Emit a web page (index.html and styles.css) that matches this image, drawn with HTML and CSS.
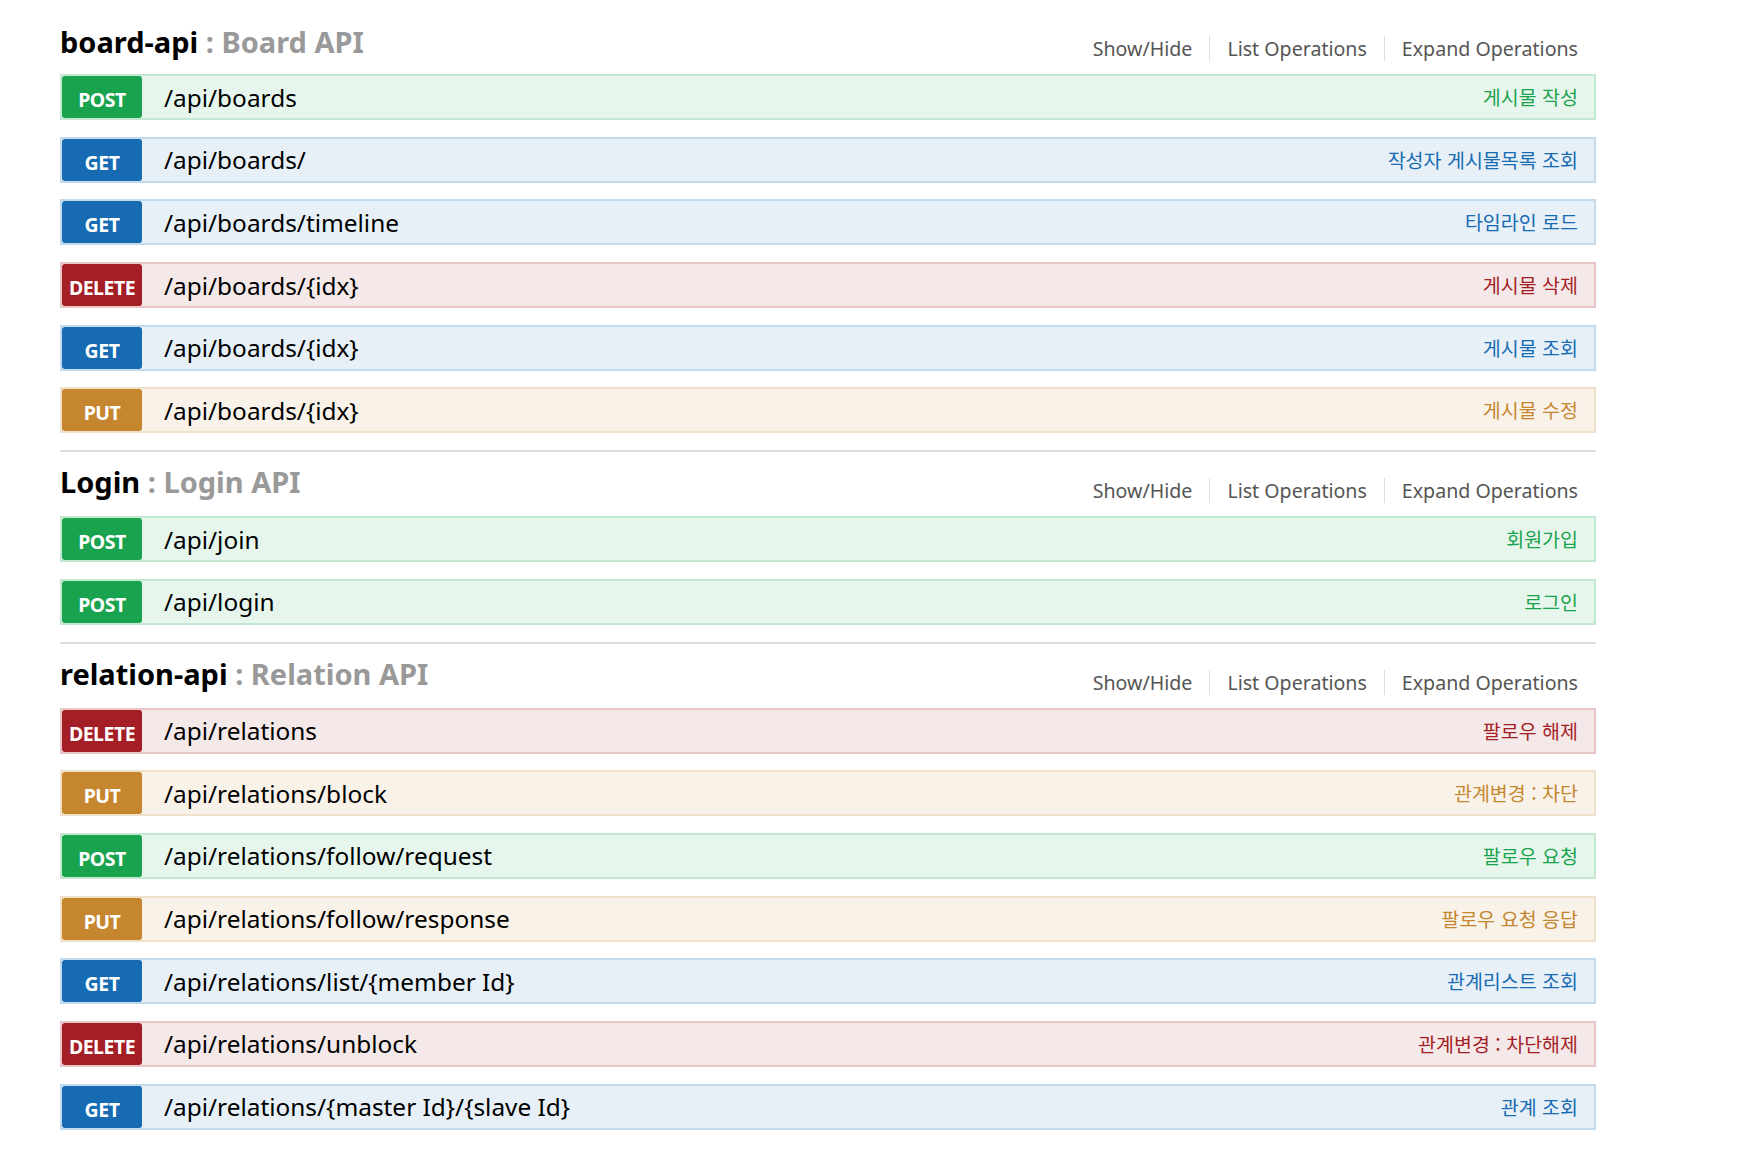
FILE: index.html
```html
<!DOCTYPE html>
<html lang="ko">
<head>
<meta charset="utf-8">
<title>Swagger API</title>
<link rel="stylesheet" href="styles.css">
</head>
<body>
<div class="resources">

  <section class="resource first">
    <div class="res-heading">
      <h2><span class="res-name">board-api</span><span class="res-desc"> : Board API</span></h2>
      <ul class="options">
        <li>Show/Hide</li>
        <li>List Operations</li>
        <li>Expand Operations</li>
      </ul>
    </div>
    <ul class="operations">
      <li class="op post"><span class="method">POST</span><span class="path">/api/boards</span><span class="summary">게시물 작성</span></li>
      <li class="op get"><span class="method">GET</span><span class="path">/api/boards/</span><span class="summary">작성자 게시물목록 조회</span></li>
      <li class="op get"><span class="method">GET</span><span class="path">/api/boards/timeline</span><span class="summary">타임라인 로드</span></li>
      <li class="op delete"><span class="method">DELETE</span><span class="path">/api/boards/{idx}</span><span class="summary">게시물 삭제</span></li>
      <li class="op get"><span class="method">GET</span><span class="path">/api/boards/{idx}</span><span class="summary">게시물 조회</span></li>
      <li class="op put"><span class="method">PUT</span><span class="path">/api/boards/{idx}</span><span class="summary">게시물 수정</span></li>
    </ul>
  </section>

  <section class="resource">
    <div class="res-heading">
      <h2><span class="res-name">Login</span><span class="res-desc"> : Login API</span></h2>
      <ul class="options">
        <li>Show/Hide</li>
        <li>List Operations</li>
        <li>Expand Operations</li>
      </ul>
    </div>
    <ul class="operations">
      <li class="op post"><span class="method">POST</span><span class="path">/api/join</span><span class="summary">회원가입</span></li>
      <li class="op post"><span class="method">POST</span><span class="path">/api/login</span><span class="summary">로그인</span></li>
    </ul>
  </section>

  <section class="resource last">
    <div class="res-heading">
      <h2><span class="res-name">relation-api</span><span class="res-desc"> : Relation API</span></h2>
      <ul class="options">
        <li>Show/Hide</li>
        <li>List Operations</li>
        <li>Expand Operations</li>
      </ul>
    </div>
    <ul class="operations">
      <li class="op delete"><span class="method">DELETE</span><span class="path">/api/relations</span><span class="summary">팔로우 해제</span></li>
      <li class="op put"><span class="method">PUT</span><span class="path">/api/relations/block</span><span class="summary">관계변경 : 차단</span></li>
      <li class="op post"><span class="method">POST</span><span class="path">/api/relations/follow/request</span><span class="summary">팔로우 요청</span></li>
      <li class="op put"><span class="method">PUT</span><span class="path">/api/relations/follow/response</span><span class="summary">팔로우 요청 응답</span></li>
      <li class="op get"><span class="method">GET</span><span class="path">/api/relations/list/{member Id}</span><span class="summary">관계리스트 조회</span></li>
      <li class="op delete"><span class="method">DELETE</span><span class="path">/api/relations/unblock</span><span class="summary">관계변경 : 차단해제</span></li>
      <li class="op get"><span class="method">GET</span><span class="path">/api/relations/{master Id}/{slave Id}</span><span class="summary">관계 조회</span></li>
    </ul>
  </section>

</div>
</body>
</html>
```

FILE: styles.css
```css
* {
  box-sizing: border-box;
}

html, body {
  margin: 0;
  padding: 0;
  background: #ffffff;
}

body {
  font-family: "Noto Sans", "Noto Sans CJK KR", sans-serif;
  color: #000;
}

.resources {
  margin-left: 60px;
  width: 1536px;
  padding-top: 10px;
}

.resource {
  border-bottom: 2px solid #dddddd;
}

.resource.last {
  border-bottom: none;
}

.res-heading {
  display: flex;
  justify-content: space-between;
  align-items: flex-start;
  height: 64px;
}

.res-heading h2 {
  margin: 0;
  padding-top: 11px;
  font-size: 29px;
  line-height: 38px;
  font-weight: 700;
  white-space: nowrap;
}

.resource.first .res-heading h2 {
  padding-top: 13px;
}

.res-name {
  color: #000000;
}

.res-desc {
  color: #999999;
}

.options {
  list-style: none;
  margin: 26px 0 0 0;
  padding: 0;
  display: flex;
}

.options li {
  font-size: 19.6px;
  line-height: 25px;
  height: 25px;
  color: #555555;
  padding: 0 17px 0 17px;
  border-right: 1px solid #dddddd;
}

.options li:last-child {
  border-right: none;
  padding-right: 18px;
}

.operations {
  list-style: none;
  margin: 0;
  padding: 0;
}

.op {
  display: flex;
  align-items: center;
  height: 46px;
  margin-bottom: 16.7px;
  border: 2px solid;
}

.method {
  flex: none;
  width: 80px;
  height: 42px;
  padding-top: 6px;
  line-height: 36px;
  border-radius: 3px;
  text-align: center;
  color: #ffffff;
  font-size: 19.5px;
  letter-spacing: -0.5px;
  font-weight: 700;
}

.path {
  flex: 1;
  margin-left: 22px;
  font-size: 24.4px;
  line-height: 32px;
  padding-top: 1px;
  color: #000000;
  white-space: nowrap;
}

.summary {
  flex: none;
  padding-right: 16px;
  font-size: 19.5px;
  line-height: 26px;
  font-family: "Noto Sans CJK KR", "Noto Sans", sans-serif;
}

.op.post {
  background: #e7f6ec;
  border-color: #c3e8d1;
}
.op.post .method {
  background: #1aa34e;
}
.op.post .summary {
  color: #1aa34e;
}

.op.get {
  background: #e7f0f7;
  border-color: #c3d9ec;
}
.op.get .method {
  background: #166bb3;
}
.op.get .summary {
  color: #166bb3;
}

.op.delete {
  background: #f5e8e8;
  border-color: #e8c6c7;
}
.op.delete .method {
  background: #a41e26;
}
.op.delete .summary {
  color: #a41e26;
}

.op.put {
  background: #f9f2e9;
  border-color: #f0e0ca;
}
.op.put .method {
  background: #c5862f;
}
.op.put .summary {
  color: #c5862f;
}
```
